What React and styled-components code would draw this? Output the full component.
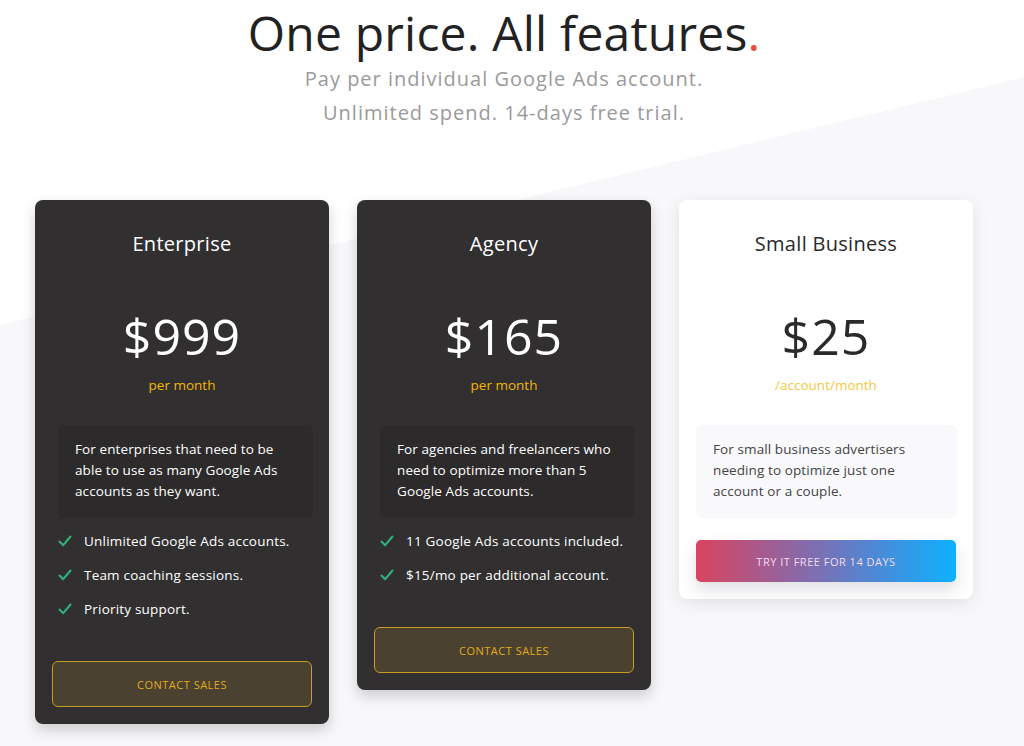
import React from 'react';
import styled, { createGlobalStyle } from 'styled-components';

const GlobalStyle = createGlobalStyle`
  html, body {
    margin: 0;
    padding: 0;
  }
  body {
    font-family: "Open Sans", "Liberation Sans", sans-serif;
    background: #fff;
  }
`;

const Page = styled.div`
  width: 1024px;
  min-height: 746px;
  box-sizing: border-box;
  padding: 0 16px 0 0;
  background: linear-gradient(166.4deg, #ffffff 32.7%, #f8f7fa 32.7%);
  overflow: hidden;
`;

const Header = styled.header`
  text-align: center;
`;

const Title = styled.h1`
  margin: 0;
  font-size: 48px;
  line-height: 66px;
  font-weight: 400;
  color: #222;
  letter-spacing: 0.2px;
`;

const Dot = styled.span`
  color: #e0513f;
`;

const Subtitle = styled.p`
  margin: -4px 0 0;
  font-size: 20px;
  line-height: 34px;
  letter-spacing: 1px;
  color: #9a9a9a;
`;

const Cards = styled.div`
  display: flex;
  justify-content: center;
  align-items: flex-start;
  gap: 28px;
  margin-top: 70px;
`;

const Card = styled.div`
  width: 294px;
  box-sizing: border-box;
  padding: 0 17px 17px;
  border-radius: 8px;
  background: ${(p) => (p.$dark ? '#312f30' : '#fff')};
  color: ${(p) => (p.$dark ? '#fff' : '#2a2a2a')};
  box-shadow: ${(p) =>
    p.$dark ? '0 6px 14px rgba(0, 0, 0, 0.18)' : '0 4px 18px rgba(0, 0, 0, 0.09)'};
  display: flex;
  flex-direction: column;
`;

const PlanName = styled.h2`
  margin: 32px 0 0;
  font-size: 20px;
  line-height: 24px;
  font-weight: 400;
  letter-spacing: 0.3px;
  text-align: center;
`;

const Price = styled.div`
  margin-top: 52px;
  font-size: 50px;
  line-height: 56px;
  letter-spacing: 1px;
  text-align: center;
`;

const Period = styled.div`
  margin-top: 11px;
  font-size: 13.5px;
  line-height: 20px;
  text-align: center;
  color: ${(p) => (p.$dark ? '#f2b705' : '#f5c842')};
`;

const Description = styled.p`
  margin: 30px ${(p) => (p.$dark ? '-1px 0 6px' : '-1px 0 0')};
  padding: 14px 17px 16px;
  border-radius: 6px;
  background: ${(p) => (p.$dark ? '#2c2a2b' : '#f9f8fb')};
  color: ${(p) => (p.$dark ? '#fff' : '#444')};
  font-size: 13.5px;
  line-height: 21px;
  letter-spacing: 0.1px;
`;

const Features = styled.ul`
  list-style: none;
  margin: 6px 0 0;
  padding: 0 0 0 6px;
`;

const Feature = styled.li`
  display: flex;
  align-items: center;
  gap: 12px;
  height: 34px;
  font-size: 13.5px;
  letter-spacing: 0.2px;
  color: #fff;
`;

const ContactButton = styled.button`
  margin-top: 35px;
  height: 46px;
  width: 100%;
  border: 1px solid #c99b22;
  border-radius: 6px;
  background: #4a4130;
  color: #e0ac1e;
  font-family: inherit;
  font-size: 11px;
  letter-spacing: 0.5px;
  text-transform: uppercase;
  cursor: pointer;
`;

const TrialButton = styled.button`
  margin-top: 22px;
  height: 42px;
  width: 100%;
  border: none;
  border-radius: 5px;
  background: linear-gradient(90deg, #d9445f 0%, #8a68a8 40%, #4a8ad8 70%, #0cb2ff 100%);
  box-shadow: 0 8px 16px rgba(60, 60, 90, 0.16);
  color: #f3dcef;
  font-family: inherit;
  font-size: 11px;
  letter-spacing: 0.5px;
  text-transform: uppercase;
  cursor: pointer;
`;

const Check = () => (
  <svg width="14" height="14" viewBox="0 0 14 14" fill="none">
    <path d="M1.5 7.5 L5.2 11.2 L12.5 2.5" stroke="#2fb57c" strokeWidth="2" strokeLinecap="round" strokeLinejoin="round" />
  </svg>
);

const plans = [
  {
    name: 'Enterprise',
    price: '$999',
    period: 'per month',
    dark: true,
    description: 'For enterprises that need to be able to use as many Google Ads accounts as they want.',
    features: ['Unlimited Google Ads accounts.', 'Team coaching sessions.', 'Priority support.'],
  },
  {
    name: 'Agency',
    price: '$165',
    period: 'per month',
    dark: true,
    description: 'For agencies and freelancers who need to optimize more than 5 Google Ads accounts.',
    features: ['11 Google Ads accounts included.', '$15/mo per additional account.'],
  },
  {
    name: 'Small Business',
    price: '$25',
    period: '/account/month',
    dark: false,
    description: 'For small business advertisers needing to optimize just one account or a couple.',
    features: [],
  },
];

const App = () => (
  <Page>
    <GlobalStyle />
    <Header>
      <Title>
        One price. All features<Dot>.</Dot>
      </Title>
      <Subtitle>
        Pay per individual Google Ads account.
        <br />
        Unlimited spend. 14-days free trial.
      </Subtitle>
    </Header>
    <Cards>
      {plans.map((plan) => (
        <Card key={plan.name} $dark={plan.dark}>
          <PlanName>{plan.name}</PlanName>
          <Price>{plan.price}</Price>
          <Period $dark={plan.dark}>{plan.period}</Period>
          <Description $dark={plan.dark}>{plan.description}</Description>
          {plan.features.length > 0 && (
            <Features>
              {plan.features.map((f) => (
                <Feature key={f}>
                  <Check />
                  {f}
                </Feature>
              ))}
            </Features>
          )}
          {plan.dark ? (
            <ContactButton>Contact sales</ContactButton>
          ) : (
            <TrialButton>Try it free for 14 days</TrialButton>
          )}
        </Card>
      ))}
    </Cards>
  </Page>
);

export default App;
